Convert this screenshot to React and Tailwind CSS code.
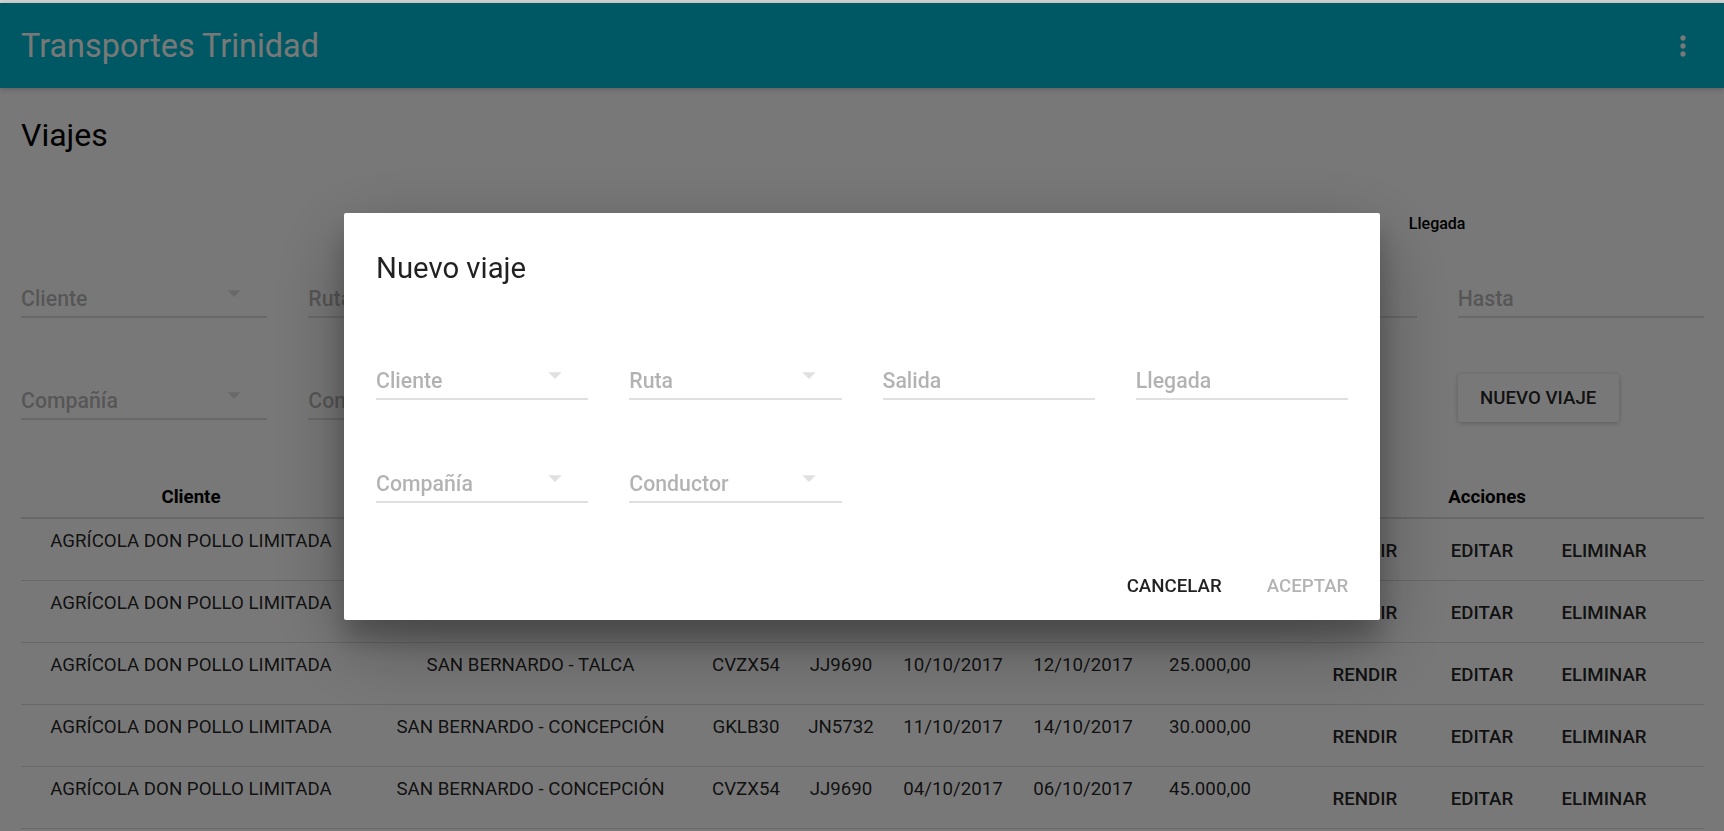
import React from "react";

const rows = [
  ["AGRÍCOLA DON POLLO LIMITADA", "SAN BERNARDO - RANCAGUA", "CVZX54", "JJ9690", "01/10/2017", "02/10/2017", "15.000,00"],
  ["AGRÍCOLA DON POLLO LIMITADA", "SAN BERNARDO - CONCEPCIÓN", "GKLB30", "JN5732", "05/10/2017", "07/10/2017", "30.000,00"],
  ["AGRÍCOLA DON POLLO LIMITADA", "SAN BERNARDO - TALCA", "CVZX54", "JJ9690", "10/10/2017", "12/10/2017", "25.000,00"],
  ["AGRÍCOLA DON POLLO LIMITADA", "SAN BERNARDO - CONCEPCIÓN", "GKLB30", "JN5732", "11/10/2017", "14/10/2017", "30.000,00"],
  ["AGRÍCOLA DON POLLO LIMITADA", "SAN BERNARDO - CONCEPCIÓN", "CVZX54", "JJ9690", "04/10/2017", "06/10/2017", "45.000,00"],
];

const headers = ["Cliente", "Ruta", "Camión", "Rampla", "Salida", "Llegada", "Monto", "Acciones"];

const cols = "grid grid-cols-[340px_339px_92px_98px_126px_134px_120px_434px]";

function Field({ label, select }) {
  return (
    <div className="relative flex h-[50px] items-end border-b-2 border-[#e0e0e0] pb-[4px]">
      <span className="text-[21.3px] leading-[26px] font-medium text-[rgba(0,0,0,0.3)]">{label}</span>
      {select && (
        <svg className="absolute right-[17px] top-[9px] h-[32px] w-[32px]" viewBox="0 0 24 24">
          <path d="M7 10l5 5 5-5z" fill="#e0e0e0" />
        </svg>
      )}
    </div>
  );
}

function MoreVert() {
  return (
    <svg className="h-[32px] w-[32px]" viewBox="0 0 24 24" fill="#ffffff">
      <path d="M12 8c1.1 0 2-.9 2-2s-.9-2-2-2-2 .9-2 2 .9 2 2 2zm0 2c-1.1 0-2 .9-2 2s.9 2 2 2 2-.9 2-2-.9-2-2-2zm0 6c-1.1 0-2 .9-2 2s.9 2 2 2 2-.9 2-2-.9-2-2-2z" />
    </svg>
  );
}

function FlatButton({ children, disabled }) {
  return (
    <button
      className={
        disabled
          ? "h-[48px] min-w-[117px] px-[21px] text-[18.7px] font-medium uppercase text-[rgba(0,0,0,0.3)]"
          : "h-[48px] min-w-[117px] px-[21px] text-[18.7px] font-medium uppercase text-[rgba(0,0,0,0.87)]"
      }
    >
      {children}
    </button>
  );
}

export default function App() {
  return (
    <div className="relative h-screen overflow-hidden bg-white font-['Roboto',sans-serif] text-[18.7px] text-[rgba(0,0,0,0.87)]">
      <div className="h-[3px] bg-[#d6d6d6]" />
      <header className="flex h-[85px] items-center justify-between bg-[#00bcd4] pl-[21px] pr-[25px] shadow-[0_1px_8px_rgba(0,0,0,0.12),0_1px_5px_rgba(0,0,0,0.12)]">
        <h1 className="text-[32.4px] leading-[40px] font-normal text-white">Transportes Trinidad</h1>
        <MoreVert />
      </header>

      <main className="pl-[21px] pr-[20px]">
        <h2 className="mt-[27px] text-[32px] leading-[40px] text-black">Viajes</h2>

        <div className="mt-[59px] grid grid-cols-6 gap-x-[41px] text-[16px] leading-[20px] font-medium text-black">
          <div className="col-span-2 col-start-3 text-center">Salida</div>
          <div className="col-span-2 text-center">Llegada</div>
        </div>

        <div className="mt-[34px] grid grid-cols-6 gap-x-[41px] gap-y-[52px]">
          <Field label="Cliente" select />
          <Field label="Ruta" select />
          <Field label="Desde" />
          <Field label="Hasta" />
          <Field label="Desde" />
          <Field label="Hasta" />
          <Field label="Compañía" select />
          <Field label="Conductor" select />
          <div />
          <div />
          <div />
          <div className="h-[50px]">
            <button className="mt-[4px] h-[48px] w-[161px] rounded-[3px] bg-white text-[18.7px] font-medium uppercase text-[rgba(0,0,0,0.87)] shadow-[0_1px_6px_rgba(0,0,0,0.12),0_1px_4px_rgba(0,0,0,0.12)]">
              Nuevo viaje
            </button>
          </div>
        </div>

        <div className="mt-[50px]">
          <div className={`${cols} border-b-2 border-[#dddddd] pt-[14px] pb-[6px] leading-[27px] font-bold text-black`}>
            {headers.map((h) => (
              <div key={h} className="text-center">{h}</div>
            ))}
          </div>
          {rows.map((r, i) => (
            <div key={i} className={`${cols} h-[62px] border-b border-[#dddddd]`}>
              {r.map((c, j) => (
                <div key={j} className="pt-[9px] text-center leading-[27px]">{c}</div>
              ))}
              <div className="flex items-center justify-center pt-[4px]">
                <FlatButton>Rendir</FlatButton>
                <FlatButton>Editar</FlatButton>
                <FlatButton>Eliminar</FlatButton>
              </div>
            </div>
          ))}
        </div>
      </main>

      <div className="fixed inset-x-0 top-[3px] bottom-0 bg-[rgba(0,0,0,0.53)]" />

      <div className="fixed left-[344px] top-[213px] w-[1036px] rounded-[2px] bg-white shadow-[0_25px_80px_rgba(0,0,0,0.30),0_20px_27px_rgba(0,0,0,0.22)]">
        <h3 className="px-[32px] pt-[34px] pb-[25px] text-[29.3px] leading-[43px] font-normal text-[rgba(0,0,0,0.87)]">
          Nuevo viaje
        </h3>
        <div className="grid grid-cols-4 gap-x-[41px] gap-y-[53px] px-[32px] pt-[35px] pb-[48px]">
          <Field label="Cliente" select />
          <Field label="Ruta" select />
          <Field label="Salida" />
          <Field label="Llegada" />
          <Field label="Compañía" select />
          <Field label="Conductor" select />
        </div>
        <div className="flex justify-end gap-[3px] p-[10.7px]">
          <FlatButton>Cancelar</FlatButton>
          <FlatButton disabled>Aceptar</FlatButton>
        </div>
      </div>
    </div>
  );
}
